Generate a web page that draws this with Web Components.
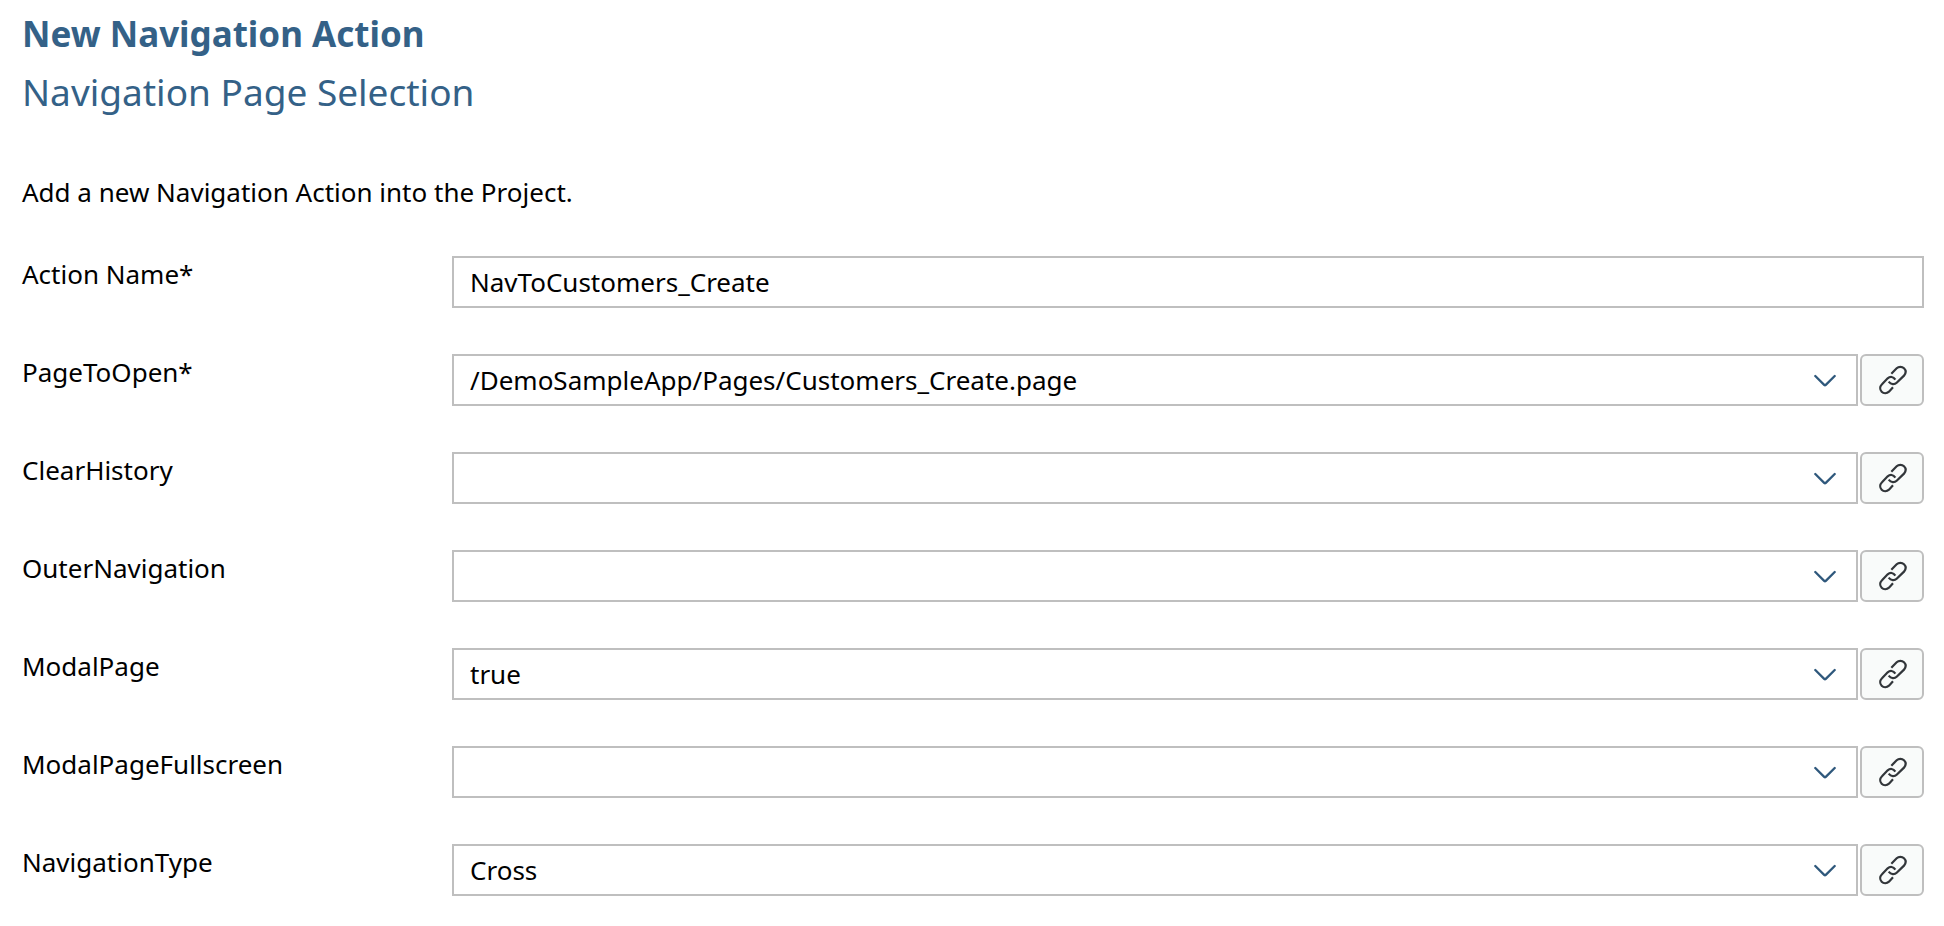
<!DOCTYPE html>
<html lang="en">
<head>
<meta charset="utf-8">
<title>New Navigation Action</title>
<style>
  body {
    margin: 0;
    background: #fff;
    color: #000;
    font-family: "Noto Sans", "Open Sans", sans-serif;
    font-size: 26px;
    line-height: 36px;
  }
</style>
</head>
<body>
<wizard-page>
  <wizard-heading slot="heading">
    <span slot="title">New Navigation Action</span>
    <span slot="subtitle">Navigation Page Selection</span>
  </wizard-heading>
  <span slot="intro">Add a new Navigation Action into the Project.</span>
  <text-field label="Action Name*" value="NavToCustomers_Create"></text-field>
  <select-field label="PageToOpen*" value="/DemoSampleApp/Pages/Customers_Create.page"></select-field>
  <select-field label="ClearHistory"></select-field>
  <select-field label="OuterNavigation"></select-field>
  <select-field label="ModalPage" value="true"></select-field>
  <select-field label="ModalPageFullscreen"></select-field>
  <select-field label="NavigationType" value="Cross"></select-field>
</wizard-page>

<script>
  class WizardPage extends HTMLElement {
    constructor() {
      super();
      this.attachShadow({ mode: 'open' }).innerHTML = `
        <style>
          :host { display: block; padding: 6px 20px 30px 22px; }
          p { margin: 54px 0 46px; }
          form { display: flex; flex-direction: column; gap: 46px; }
        </style>
        <slot name="heading"></slot>
        <p><slot name="intro"></slot></p>
        <form><slot></slot></form>`;
    }
  }

  class WizardHeading extends HTMLElement {
    constructor() {
      super();
      this.attachShadow({ mode: 'open' }).innerHTML = `
        <style>
          :host { display: flex; flex-direction: column; gap: 2px; color: #346187; }
          h1, h2 { margin: 0; line-height: 56px; }
          h1 { font-size: 35px; font-weight: 700; }
          h2 { font-size: 37px; font-weight: 400; }
        </style>
        <h1><slot name="title"></slot></h1>
        <h2><slot name="subtitle"></slot></h2>`;
    }
  }

  const fieldStyles = `
    :host { display: grid; grid-template-columns: 430px minmax(0, 1fr); align-items: start; }
    input, select {
      box-sizing: border-box;
      width: 100%;
      height: 52px;
      margin: 0;
      padding: 0 16px;
      border: 2px solid #bfbfbf;
      border-radius: 0;
      background: #fff;
      color: inherit;
      font: inherit;
      appearance: none;
    }
    input:focus-visible, select:focus-visible { outline: 2px solid #346187; }`;

  class TextField extends HTMLElement {
    connectedCallback() {
      const root = this.attachShadow({ mode: 'open' });
      root.innerHTML = `
        <style>${fieldStyles}</style>
        <label for="control"></label>
        <input id="control" type="text">`;
      root.querySelector('label').textContent = this.getAttribute('label');
      root.querySelector('input').value = this.getAttribute('value') || '';
    }
  }

  class SelectField extends HTMLElement {
    connectedCallback() {
      const root = this.attachShadow({ mode: 'open' });
      root.innerHTML = `
        <style>
          ${fieldStyles}
          .row { display: flex; gap: 2px; }
          .box { flex: 1; min-width: 0; display: grid; align-items: center; }
          .box > * { grid-area: 1 / 1; }
          select { padding-right: 60px; }
          .box svg { justify-self: end; margin-right: 22px; pointer-events: none; }
        </style>
        <label for="control"></label>
        <div class="row">
          <div class="box">
            <select id="control"><option></option></select>
            <svg width="22" height="14" viewBox="0 -2 22 14" fill="none" stroke="#2f587c"
                 stroke-width="2.3" stroke-linecap="round" stroke-linejoin="round" aria-hidden="true">
              <path d="M1.3 1 10.2 9.9Q11 10.6 11.8 9.9L20.7 1"/>
            </svg>
          </div>
          <link-button></link-button>
        </div>`;
      root.querySelector('label').textContent = this.getAttribute('label');
      root.querySelector('option').textContent = this.getAttribute('value') || '';
    }
  }

  class LinkButton extends HTMLElement {
    constructor() {
      super();
      this.attachShadow({ mode: 'open' }).innerHTML = `
        <style>
          :host { display: block; }
          button {
            box-sizing: border-box;
            display: grid;
            place-items: center;
            width: 64px;
            height: 52px;
            padding: 0;
            border: 2px solid #bfbfbf;
            border-radius: 6px;
            background: #f9fbfa;
            color: #32363a;
            cursor: pointer;
          }
        </style>
        <button type="button" aria-label="Bind to object">
          <svg width="30" height="30" viewBox="82 60 90 90" fill="none" stroke="currentColor"
               stroke-width="6.6" aria-hidden="true">
            <path d="M125 86 141 70C147 64 157 64 163 70S169 85 163 92L141 113C135 119 124 119 117 110"/>
            <path d="M137 104C131 94 121 94 114 100L97 118C90 125 90 134 96 140S112 145 118 140L130 127"/>
          </svg>
        </button>`;
    }
  }

  customElements.define('link-button', LinkButton);
  customElements.define('wizard-heading', WizardHeading);
  customElements.define('text-field', TextField);
  customElements.define('select-field', SelectField);
  customElements.define('wizard-page', WizardPage);
</script>
</body>
</html>
